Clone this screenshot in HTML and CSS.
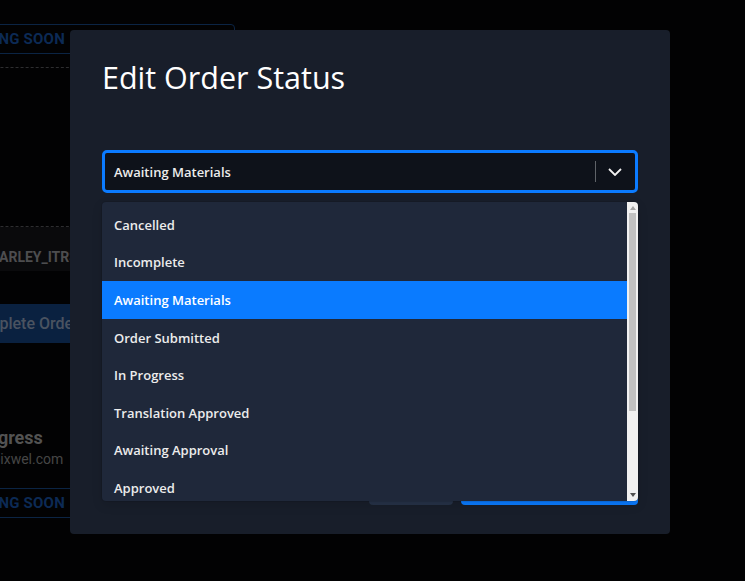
FILE: index.html
```html
<!DOCTYPE html>
<html lang="en">
<head>
<meta charset="utf-8">
<title>Edit Order Status</title>
<link rel="stylesheet" href="styles.css">
</head>
<body>
<div class="page">
  <div class="soon-btn top"><span class="soon-text">COMING SOON</span></div>
  <div class="dash"></div>
  <div class="dash second"></div>
  <div class="ref-band"><span class="ref">HARLEY_ITRS_2291</span></div>
  <div class="complete-btn"><span class="complete-text">Complete Order</span></div>
  <div class="status-name">In Progress</div>
  <div class="status-mail">orders@pixwel.com</div>
  <div class="soon-btn bottom"><span class="soon-text">COMING SOON</span></div>
</div>

<div class="modal">
  <h2 class="modal-title">Edit Order Status</h2>
  <div class="select-wrap">
    <div class="select">
      <span class="select-value">Awaiting Materials</span>
      <span class="select-sep"></span>
      <svg class="chevron" width="14" height="8" viewBox="0 0 14 8"><path d="M1 1 L7 7 L13 1" fill="none" stroke="#f2f2f2" stroke-width="1.8"/></svg>
    </div>
    <div class="menu">
      <ul class="options">
        <li class="option">Cancelled</li>
        <li class="option">Incomplete</li>
        <li class="option active">Awaiting Materials</li>
        <li class="option">Order Submitted</li>
        <li class="option">In Progress</li>
        <li class="option">Translation Approved</li>
        <li class="option">Awaiting Approval</li>
        <li class="option">Approved</li>
        <li class="option">Completed</li>
      </ul>
      <div class="scrollbar">
        <span class="arrow up"></span>
        <span class="thumb"></span>
        <span class="arrow down"></span>
      </div>
    </div>
  </div>
  <div class="footer">
    <button class="btn btn-cancel">Cancel</button>
    <button class="btn btn-save">Update Status</button>
  </div>
</div>
</body>
</html>
```

FILE: styles.css
```css
* { box-sizing: border-box; }

html, body {
  margin: 0;
  padding: 0;
}

body {
  width: 745px;
  height: 581px;
  overflow: hidden;
  position: relative;
  background: #020203;
  font-family: Roboto, "Liberation Sans", Arial, sans-serif;
}

/* dimmed page behind the modal */
.page {
  width: 300px;
  margin-left: -65px;
  padding-top: 24px;
  display: flex;
  flex-direction: column;
}

.soon-btn {
  height: 30px;
  border: 1px solid #0b2444;
  border-radius: 4px;
  display: flex;
  align-items: center;
  padding-left: 24px;
}

.soon-text {
  font-weight: 700;
  font-size: 15px;
  color: #0c2a55;
  letter-spacing: 0.2px;
}

.dash {
  margin-top: 13px;
  border-top: 1px dashed #2e2e30;
}

.dash.second {
  margin-top: 158px;
}

.ref-band {
  height: 44px;
  background: #0a0a0c;
  padding-top: 20px;
  padding-left: 54px;
}

.ref {
  font-weight: 700;
  font-size: 14px;
  color: #4d4d4f;
}

.complete-btn {
  margin-top: 33px;
  height: 39px;
  background: #0a2140;
  border-radius: 4px;
  display: flex;
  align-items: center;
  padding-left: 31px;
}

.complete-text {
  font-size: 16px;
  font-weight: 500;
  color: #4a5360;
}

.status-name {
  margin-top: 84px;
  padding-left: 15px;
  font-size: 18px;
  line-height: 22px;
  font-weight: 700;
  color: #525252;
}

.status-mail {
  margin-top: 1px;
  padding-left: 5px;
  font-size: 14px;
  line-height: 18px;
  color: #464646;
}

.soon-btn.bottom {
  margin-top: 20px;
}

/* modal */
.modal {
  position: absolute;
  left: 70px;
  top: 30px;
  width: 600px;
  height: 504px;
  background: #181e2a;
  border-radius: 4px;
  padding: 29px 32px 29px 32px;
  display: flex;
  flex-direction: column;
  font-family: "Open Sans", "Noto Sans", sans-serif;
}

.modal-title {
  margin: 0;
  font-size: 30.5px;
  line-height: 37px;
  font-weight: 400;
  color: #ffffff;
}

.select-wrap {
  position: relative;
  margin-top: 54px;
}

.select {
  height: 43px;
  border: 3px solid #0b7bff;
  border-radius: 5px;
  background: #0e121a;
  display: flex;
  align-items: center;
  padding-left: 9px;
  padding-right: 13px;
}

.select-value {
  flex: 1;
  font-size: 13px;
  font-weight: 600;
  color: #ececec;
}

.select-sep {
  width: 1px;
  height: 21px;
  background: #5f6368;
  margin-right: 12px;
}

.chevron {
  display: block;
}

.menu {
  position: absolute;
  top: calc(100% + 9px);
  left: 0;
  right: 0;
  height: 299px;
  background: #1f283a;
  border-radius: 4px;
  overflow: hidden;
  display: flex;
  box-shadow: 0 0 0 1px rgba(0, 0, 0, 0.08), 0 4px 11px rgba(0, 0, 0, 0.12);
  z-index: 2;
}

.options {
  flex: 1;
  list-style: none;
  margin: 0;
  padding: 4px 0 0 0;
}

.option {
  height: 37.6px;
  display: flex;
  align-items: center;
  padding-left: 12px;
  font-size: 13px;
  font-weight: 600;
  color: #ececec;
}

.option.active {
  background: #0a7bff;
  color: #ffffff;
}

.scrollbar {
  width: 11px;
  background: #f1f1f1;
  position: relative;
  display: flex;
  flex-direction: column;
  align-items: center;
}

.thumb {
  margin-top: 11px;
  width: 7px;
  height: 198px;
  background: #c1c1c1;
}

.arrow {
  position: absolute;
  width: 0;
  height: 0;
  border-left: 3.5px solid transparent;
  border-right: 3.5px solid transparent;
}

.arrow.up {
  top: 4px;
  border-bottom: 4px solid #a3a3a3;
}

.arrow.down {
  bottom: 4px;
  border-top: 4px solid #505050;
}

.footer {
  margin-top: auto;
  display: flex;
  justify-content: flex-end;
  gap: 8px;
}

.btn {
  height: 36px;
  border: none;
  border-radius: 4px;
  font-family: inherit;
  font-size: 14px;
  font-weight: 600;
  color: #ffffff;
}

.btn-cancel {
  width: 84px;
  background: #263247;
}

.btn-save {
  width: 177px;
  background: #0a7bff;
}
```
